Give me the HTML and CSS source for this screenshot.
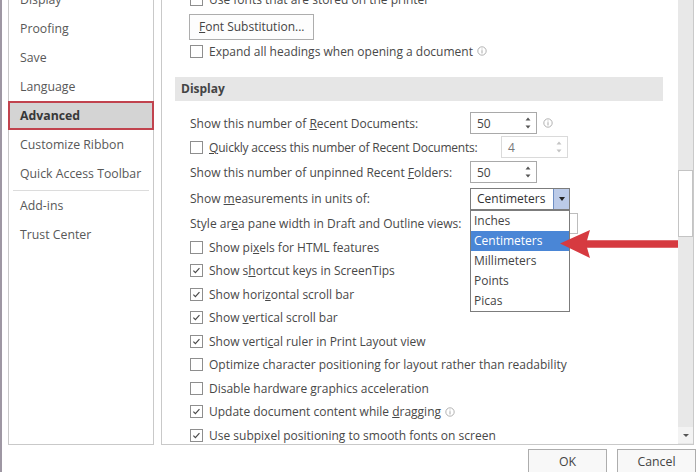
FILE: index.html
```html
<!DOCTYPE html>
<html>
<head>
<meta charset="utf-8">
<link rel="stylesheet" href="styles.css">
</head>
<body>
<div class="dialog">
  <div class="panes">
    <nav class="sidebar">
      <div class="nav-list">
        <div class="nav-item">Display</div>
        <div class="nav-item">Proofing</div>
        <div class="nav-item">Save</div>
        <div class="nav-item">Language</div>
        <div class="nav-item active">Advanced</div>
        <div class="nav-item">Customize Ribbon</div>
        <div class="nav-item">Quick Access Toolbar</div>
        <div class="nav-sep"></div>
        <div class="nav-item">Add-ins</div>
        <div class="nav-item">Trust Center</div>
      </div>
    </nav>
    <section class="main">
      <div class="viewport">
        <div class="content">
          <div class="opt">
            <span class="cb"></span><span>Use fonts that are stored on the printer</span>
          </div>
          <div class="btn-row"><span class="btn"><u>F</u>ont Substitution...</span></div>
          <div class="opt">
            <span class="cb"></span><span>Expand all headings when opening a document</span>
            <svg class="info" viewBox="0 0 11 11"><circle cx="5.5" cy="5.5" r="4.6" fill="none" stroke="#a0a0a0" stroke-width="0.9"/><rect x="5" y="4.6" width="1" height="3.6" fill="#a0a0a0"/><rect x="5" y="2.8" width="1" height="1" fill="#a0a0a0"/></svg>
          </div>

          <div class="section-head">Display</div>

          <div class="opt row-recent">
            <span class="lbl">Show this number of <u>R</u>ecent Documents:</span>
            <span class="spin"><span>50</span>
              <svg class="arrows" viewBox="0 0 6 14"><path d="M0.5 4.5 L3 1.5 L5.5 4.5 Z" fill="#555"/><path d="M0.5 9.5 L3 12.5 L5.5 9.5 Z" fill="#555"/></svg>
            </span>
            <svg class="info spin-info" viewBox="0 0 11 11"><circle cx="5.5" cy="5.5" r="4.6" fill="none" stroke="#a0a0a0" stroke-width="0.9"/><rect x="5" y="4.6" width="1" height="3.6" fill="#a0a0a0"/><rect x="5" y="2.8" width="1" height="1" fill="#a0a0a0"/></svg>
          </div>
          <div class="opt row-quick">
            <span class="cb"></span><span class="lbl-quick"><u>Q</u>uickly access this number of Recent Documents:</span>
            <span class="spin disabled"><span>4</span>
              <svg class="arrows" viewBox="0 0 6 14"><path d="M0.5 4.5 L3 1.5 L5.5 4.5 Z" fill="#c4c4c4"/><path d="M0.5 9.5 L3 12.5 L5.5 9.5 Z" fill="#c4c4c4"/></svg>
            </span>
          </div>
          <div class="opt row-folders">
            <span class="lbl">Show this number of unpinned Recent <u>F</u>olders:</span>
            <span class="spin"><span>50</span>
              <svg class="arrows" viewBox="0 0 6 14"><path d="M0.5 4.5 L3 1.5 L5.5 4.5 Z" fill="#555"/><path d="M0.5 9.5 L3 12.5 L5.5 9.5 Z" fill="#555"/></svg>
            </span>
          </div>
          <div class="opt row-measure">
            <span class="lbl">Show <u>m</u>easurements in units of:</span>
            <span class="combo">
              <span class="combo-text">Centimeters</span>
              <span class="combo-btn"><span class="tri"></span></span>
              <span class="dropdown">
                <span class="dd-item">Inches</span>
                <span class="dd-item selected">Centimeters</span>
                <span class="dd-item">Millimeters</span>
                <span class="dd-item">Points</span>
                <span class="dd-item">Picas</span>
              </span>
            </span>
          </div>
          <div class="opt row-style">
            <span class="lbl">Style ar<u>e</u>a pane width in Draft and Outline views:</span>
            <span class="field"></span>
          </div>
          <div class="opt row-pixels">
            <span class="cb"></span><span>Show pi<u>x</u>els for HTML features</span>
          </div>
          <div class="opt">
            <span class="cb checked"><svg viewBox="0 0 13 13"><path d="M2.8 6.6 L5.2 9 L10 3.6" fill="none" stroke="#4a4a4a" stroke-width="1.4"/></svg></span><span>Show s<u>h</u>ortcut keys in ScreenTips</span>
          </div>
          <div class="opt">
            <span class="cb checked"><svg viewBox="0 0 13 13"><path d="M2.8 6.6 L5.2 9 L10 3.6" fill="none" stroke="#4a4a4a" stroke-width="1.4"/></svg></span><span>Show hori<u>z</u>ontal scroll bar</span>
          </div>
          <div class="opt">
            <span class="cb checked"><svg viewBox="0 0 13 13"><path d="M2.8 6.6 L5.2 9 L10 3.6" fill="none" stroke="#4a4a4a" stroke-width="1.4"/></svg></span><span>Show <u>v</u>ertical scroll bar</span>
          </div>
          <div class="opt">
            <span class="cb checked"><svg viewBox="0 0 13 13"><path d="M2.8 6.6 L5.2 9 L10 3.6" fill="none" stroke="#4a4a4a" stroke-width="1.4"/></svg></span><span>Show verti<u>c</u>al ruler in Print Layout view</span>
          </div>
          <div class="opt">
            <span class="cb"></span><span>Optimize character positioning for layout rather than readability</span>
          </div>
          <div class="opt">
            <span class="cb"></span><span>Disable hardware graphics acceleration</span>
          </div>
          <div class="opt">
            <span class="cb checked"><svg viewBox="0 0 13 13"><path d="M2.8 6.6 L5.2 9 L10 3.6" fill="none" stroke="#4a4a4a" stroke-width="1.4"/></svg></span><span>Update document content while <u>d</u>ragging</span>
            <svg class="info" viewBox="0 0 11 11"><circle cx="5.5" cy="5.5" r="4.6" fill="none" stroke="#a0a0a0" stroke-width="0.9"/><rect x="5" y="4.6" width="1" height="3.6" fill="#a0a0a0"/><rect x="5" y="2.8" width="1" height="1" fill="#a0a0a0"/></svg>
          </div>
          <div class="opt">
            <span class="cb checked"><svg viewBox="0 0 13 13"><path d="M2.8 6.6 L5.2 9 L10 3.6" fill="none" stroke="#4a4a4a" stroke-width="1.4"/></svg></span><span>Use subpixel positioning to smooth fonts on screen</span>
          </div>
        </div>
        <svg class="red-arrow" viewBox="0 0 130 32">
          <line x1="26" y1="16" x2="125" y2="16" stroke="#d63a40" stroke-width="7.5" stroke-linecap="round"/>
          <path d="M1 15.5 L31 2 L27 16 L31 30 Z" fill="#d63a40"/>
        </svg>
      </div>
      <div class="scrollbar">
        <div class="track"><div class="thumb"></div></div>
        <div class="sb-down"><span class="sb-tri"></span></div>
      </div>
    </section>
  </div>
  <footer class="buttons">
    <span class="dbtn">OK</span>
    <span class="dbtn">Cancel</span>
  </footer>
</div>
</body>
</html>
```
FILE: styles.css
```css
* { box-sizing: border-box; }
html, body { margin: 0; padding: 0; }
body {
  width: 700px;
  height: 472px;
  overflow: hidden;
  background: #fff;
  font-family: "Open Sans", "Noto Sans", sans-serif;
  font-size: 12px;
  color: #484848;
}
u { text-decoration: underline; text-underline-offset: 1px; }

.dialog {
  height: 472px;
  border-left: 2px solid #9e97a3;
  display: flex;
  flex-direction: column;
}
.panes {
  height: 445px;
  flex: none;
  display: flex;
}

/* sidebar */
.sidebar {
  width: 146px;
  margin-left: 6px;
  border: 1px solid #c9c9c9;
  border-top: none;
  overflow: visible;
}
.nav-list { margin-top: -15px; }
.nav-item {
  height: 29px;
  line-height: 29px;
  padding-left: 11px;
  color: #585858;
  font-size: 12.3px;
  white-space: nowrap;
}
.nav-item.active {
  margin: 0 -1px;
  padding-left: 10px;
  border: 2px solid #c1434e;
  background: #d4d4d4;
  line-height: 25px;
  color: #383838;
  font-weight: 700;
}
.nav-sep {
  height: 1px;
  margin: 2px 4px 0;
  background: #dcdcdc;
}

/* main panel */
.main {
  width: 533px;
  margin-left: 7px;
  border: 1px solid #c9c9c9;
  border-top: none;
  display: flex;
}
.viewport {
  flex: 1;
  position: relative;
  overflow: hidden;
}
.content {
  margin-top: -12px;
  padding-left: 13px;
  padding-right: 15px;
}
.opt {
  height: 23.5px;
  padding-left: 15px;
  display: flex;
  align-items: center;
  white-space: nowrap;
}
.cb {
  width: 13px;
  height: 13px;
  flex: none;
  border: 1px solid #8e8e8e;
  background: #fff;
  margin-right: 6px;
  display: flex;
}
.cb svg { width: 11px; height: 11px; }
.info { width: 10px; height: 10px; margin-left: 4px; }

.btn-row {
  height: 26px;
  margin-top: 2px;
  padding-left: 14px;
  display: flex;
}
.btn {
  height: 26px;
  line-height: 24px;
  padding: 0 9px;
  border: 1px solid #adadad;
  background: #fdfdfd;
  color: #444;
}

.section-head {
  margin-top: 14px;
  margin-bottom: 10px;
  height: 24px;
  line-height: 24px;
  padding-left: 6px;
  background: #e6e6e6;
  font-weight: 700;
  color: #444;
}

.lbl { width: 280px; flex: none; }
.lbl-quick { width: 292px; flex: none; letter-spacing: -0.2px; }
.row-recent { height: 24px; }
.row-quick { height: 24px; }
.row-folders { height: 26px; }
.row-measure { height: 27px; }
.row-style { height: 23px; }
.row-pixels { height: 24px; }

.spin {
  width: 67px;
  height: 22px;
  flex: none;
  border: 1px solid #a9a9a9;
  padding: 0 5px 0 6px;
  display: flex;
  align-items: center;
  justify-content: space-between;
  color: #444;
}
.spin .arrows { width: 6px; height: 14px; }
.spin.disabled { border-color: #dadada; color: #777; }
.spin-info { margin-left: 6px; }

.combo {
  position: relative;
  width: 100px;
  height: 22px;
  flex: none;
  border: 1px solid #7c7c7c;
  display: flex;
}
.combo-text { flex: 1; padding-left: 6px; line-height: 20px; color: #333; }
.combo-btn {
  width: 16px;
  border-left: 1px solid #6f8fc4;
  background: #bccbe8;
  display: flex;
  align-items: center;
  justify-content: center;
}
.tri {
  width: 0; height: 0;
  border-left: 3.5px solid transparent;
  border-right: 3.5px solid transparent;
  border-top: 4px solid #222;
}
.dropdown {
  position: absolute;
  top: 21px;
  left: -1px;
  width: 100px;
  border: 1px solid #7c7c7c;
  background: #fff;
  z-index: 2;
  display: flex;
  flex-direction: column;
}
.dd-item {
  height: 20px;
  line-height: 20px;
  padding-left: 3px;
  color: #444;
}
.dd-item.selected { background: #4a86d6; color: #fff; }

.field {
  width: 108px;
  height: 21px;
  flex: none;
  border: 1px solid #bdbdbd;
}

.red-arrow {
  position: absolute;
  left: 397px;
  top: 228px;
  width: 130px;
  height: 32px;
  z-index: 3;
}

/* scrollbar */
.scrollbar {
  width: 15px;
  flex: none;
  background: #e8e8e8;
  display: flex;
  flex-direction: column;
  padding-bottom: 1px;
}
.track { flex: 1; }
.thumb {
  margin-top: 170px;
  height: 67px;
  background: #fff;
  border: 1px solid #c4c4c4;
}
.sb-down {
  height: 16px;
  display: flex;
  align-items: center;
  justify-content: center;
  background: #f3f3f3;
}
.sb-tri {
  width: 0; height: 0;
  border-left: 3px solid transparent;
  border-right: 3px solid transparent;
  border-top: 3.5px solid #555;
}

/* footer */
.buttons {
  flex: 1;
  display: flex;
  gap: 10px;
  padding-left: 526px;
  padding-top: 4px;
}
.dbtn {
  width: 79px;
  height: 26px;
  flex: none;
  border: 1px solid #adadad;
  background: #f8f8f8;
  text-align: center;
  line-height: 24px;
  color: #444;
  font-size: 12.3px;
}
```
